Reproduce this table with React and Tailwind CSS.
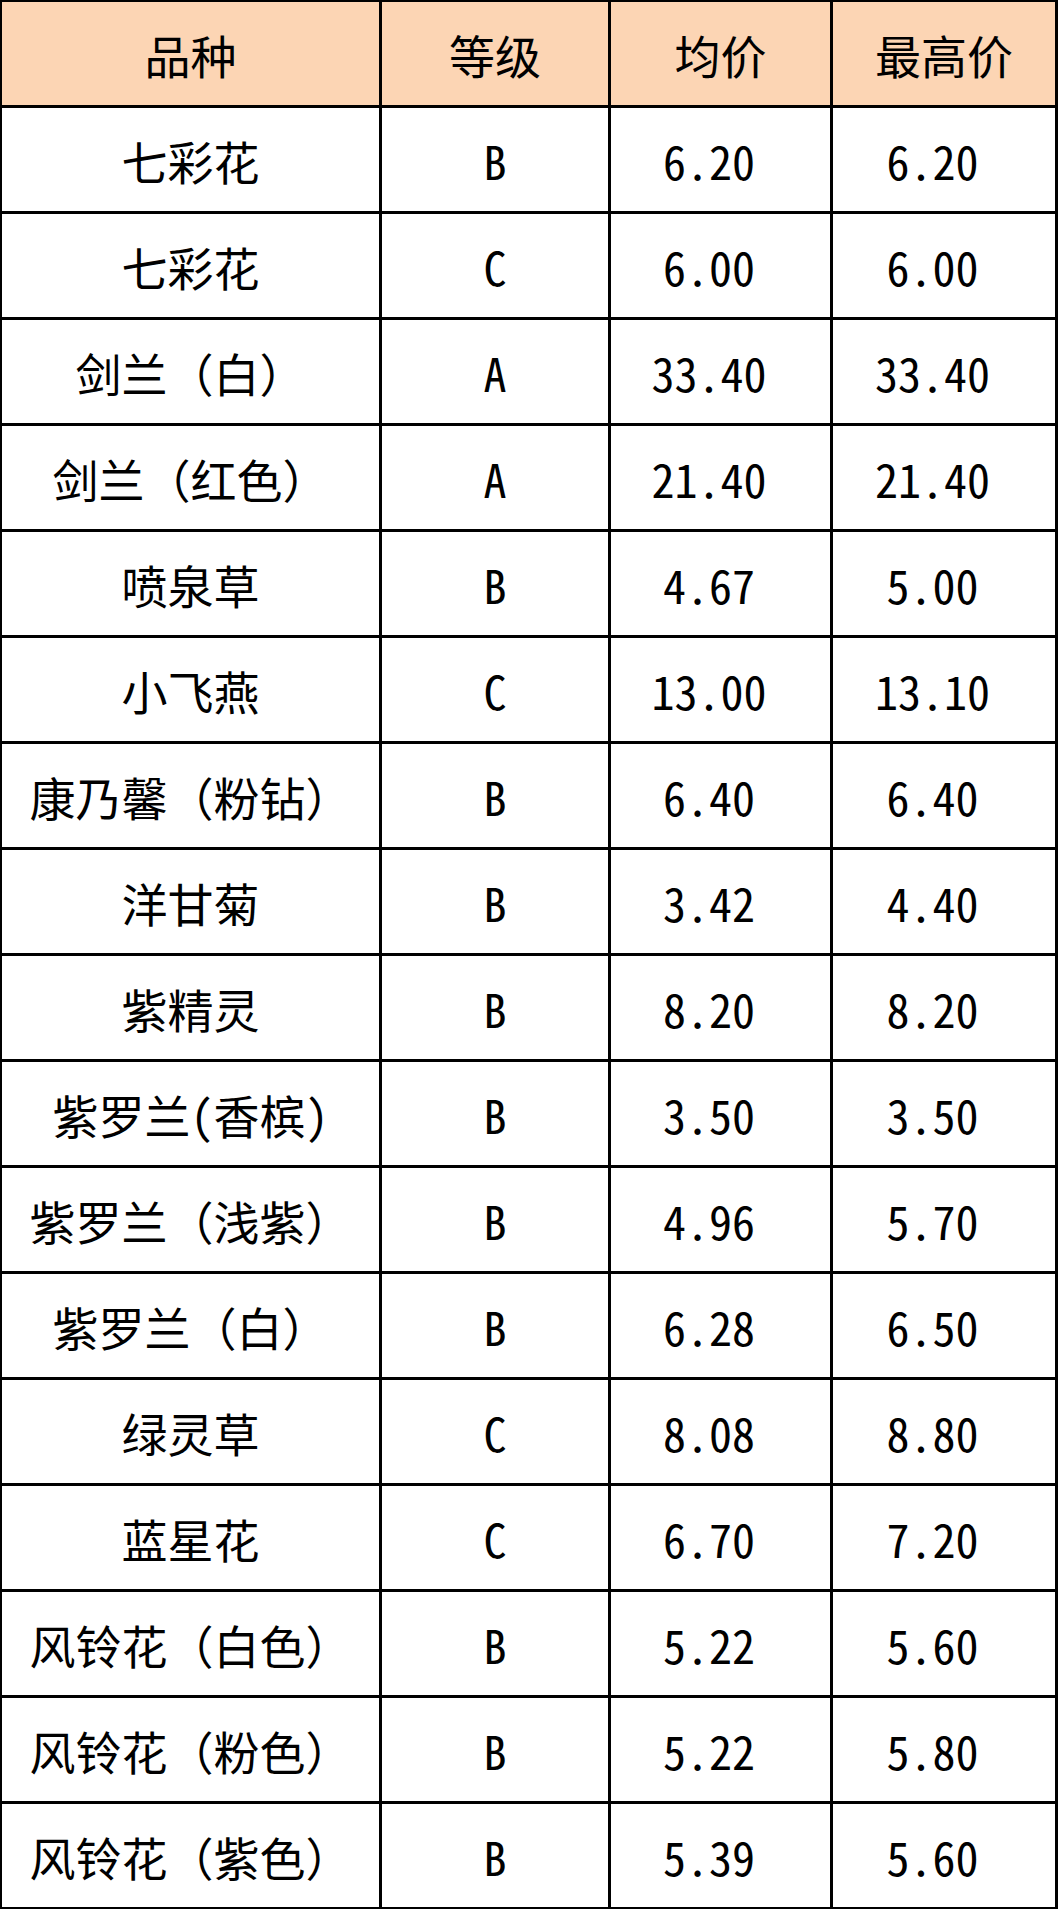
import React from "react";

const rows = [
  ["七彩花", "B", "6.20", "6.20"],
  ["七彩花", "C", "6.00", "6.00"],
  ["剑兰（白）", "A", "33.40", "33.40"],
  ["剑兰（红色）", "A", "21.40", "21.40"],
  ["喷泉草", "B", "4.67", "5.00"],
  ["小飞燕", "C", "13.00", "13.10"],
  ["康乃馨（粉钻）", "B", "6.40", "6.40"],
  ["洋甘菊", "B", "3.42", "4.40"],
  ["紫精灵", "B", "8.20", "8.20"],
  ["紫罗兰(香槟)", "B", "3.50", "3.50"],
  ["紫罗兰（浅紫）", "B", "4.96", "5.70"],
  ["紫罗兰（白）", "B", "6.28", "6.50"],
  ["绿灵草", "C", "8.08", "8.80"],
  ["蓝星花", "C", "6.70", "7.20"],
  ["风铃花（白色）", "B", "5.22", "5.60"],
  ["风铃花（粉色）", "B", "5.22", "5.80"],
  ["风铃花（紫色）", "B", "5.39", "5.60"],
];

function Cell({ children, head, num }) {
  const full = typeof children === "string" && children.includes("（");
  return (
    <div
      className={
        "flex items-center justify-center whitespace-nowrap text-[46px] leading-none text-black " +
        (head ? "bg-[#fcd5b4] " : "bg-white ") +
        (full ? "" : "[font-feature-settings:'hwid'] ") +
        (num ? "pr-[23px]" : "")
      }
    >
      {children}
    </div>
  );
}

export default function App() {
  return (
    <div className="w-[1058px] bg-white font-['Noto_Sans_CJK_SC',sans-serif]">
      <div className="grid grid-cols-[377px_226px_219px_222px] auto-rows-[103px] gap-[3px] border-l-2 border-r-[3px] border-t-2 border-b-[3px] border-black bg-black">
        <Cell head>品种</Cell>
        <Cell head>等级</Cell>
        <Cell head>均价</Cell>
        <Cell head>最高价</Cell>
        {rows.map((r, i) => (
          <React.Fragment key={i}>
            {r.map((c, j) => (
              <Cell key={j} num={j >= 2}>
                {c}
              </Cell>
            ))}
          </React.Fragment>
        ))}
      </div>
    </div>
  );
}
